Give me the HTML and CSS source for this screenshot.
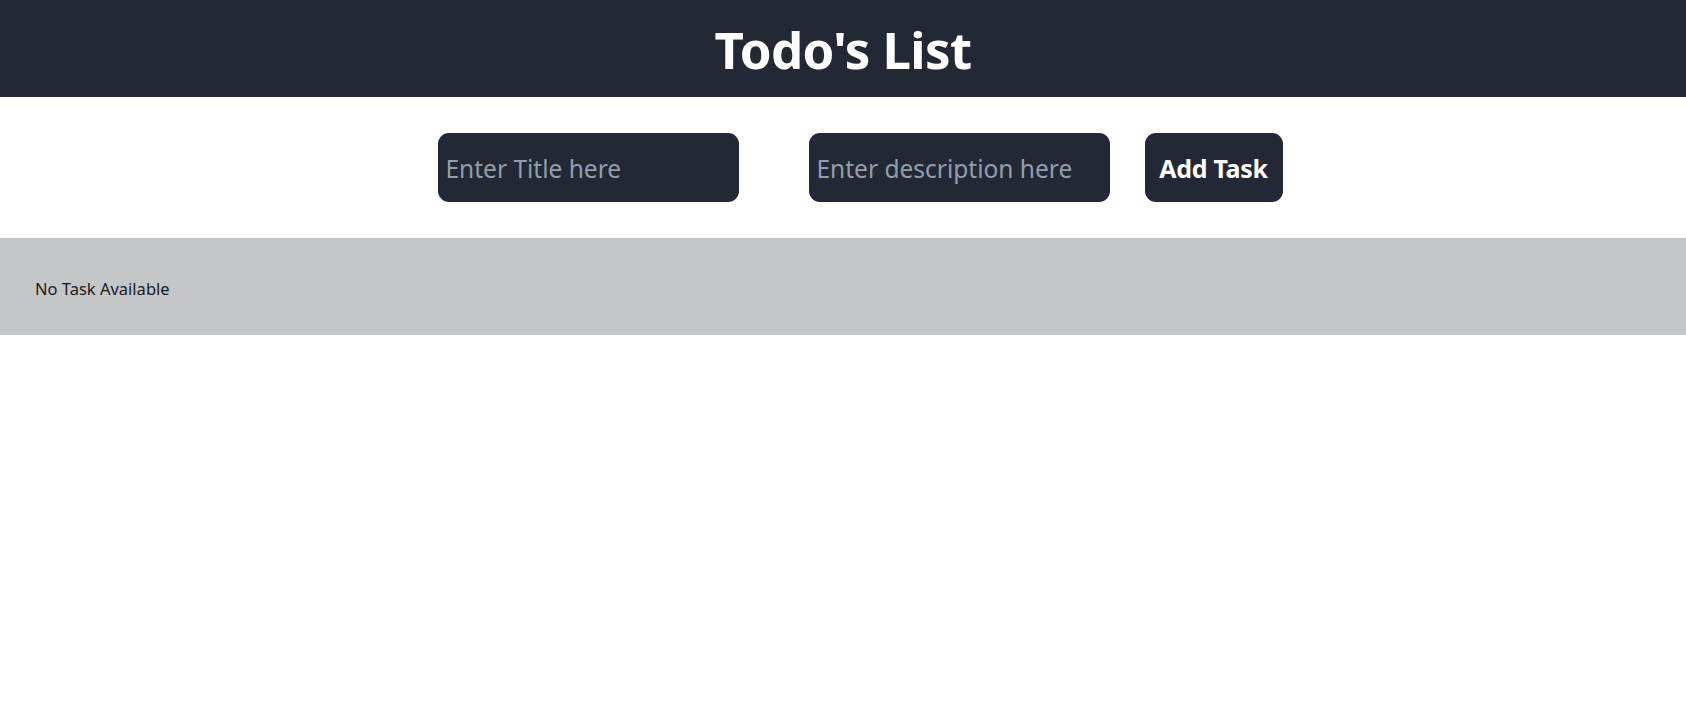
FILE: index.html
```html
<!DOCTYPE html>
<html>
<head>
<meta charset="utf-8">
<title>Todo's List</title>
<link rel="stylesheet" href="styles.css">
</head>
<body>
<header class="topbar">
  <h1 class="title">Todo's List</h1>
</header>
<section class="form-row">
  <input class="field field-title" type="text" placeholder="Enter Title here">
  <input class="field field-desc" type="text" placeholder="Enter description here">
  <button class="add-btn">Add Task</button>
</section>
<section class="task-list">
  <p class="empty">No Task Available</p>
</section>
</body>
</html>
```
FILE: styles.css
```css
* { box-sizing: border-box; }
body {
  margin: 0;
  font-family: "Noto Sans", "Open Sans", sans-serif;
  background: #ffffff;
  color: #1b1b1b;
}
.topbar {
  height: 97px;
  background: #222834;
  display: flex;
  align-items: center;
  justify-content: center;
}
.title {
  margin: 2px 0 0 0;
  color: #ffffff;
  font-size: 51px;
  font-weight: 700;
  line-height: 1;
  letter-spacing: -0.6px;
}
.form-row {
  display: flex;
  justify-content: center;
  align-items: center;
  padding: 36px 0 36px 34px;
}
.field {
  width: 301px;
  height: 69px;
  border: none;
  border-radius: 11px;
  background: #222834;
  color: #ffffff;
  font-family: "Noto Sans", "Open Sans", sans-serif;
  font-size: 24.5px;
  padding: 2px 8px 0 8px;
  outline: none;
}
.field::placeholder { color: #949eab; }
.field-title { margin-right: 70px; }
.field-desc { margin-right: 35px; }
.add-btn {
  width: 138px;
  height: 69px;
  border: none;
  border-radius: 11px;
  background: #222834;
  color: #ffffff;
  font-family: "Noto Sans", "Open Sans", sans-serif;
  font-size: 25px;
  font-weight: 700;
  letter-spacing: -0.3px;
  padding: 0;
}
.task-list {
  height: 97px;
  background: #c5c6c8;
  display: flex;
  align-items: center;
  padding: 0 35px;
}
.empty {
  margin: 4px 0 0 0;
  font-size: 16.5px;
  color: #1b1b1b;
}
```
